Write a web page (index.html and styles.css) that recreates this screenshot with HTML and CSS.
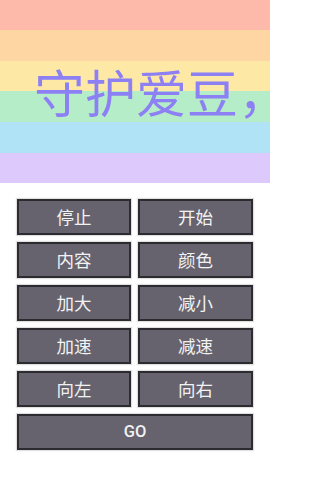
FILE: index.html
```html
<!DOCTYPE html>
<html lang="zh">
<head>
<meta charset="utf-8">
<link rel="stylesheet" href="styles.css">
</head>
<body>
<div class="banner">
  <div class="title">守护爱豆<span class="comma">，</span></div>
</div>
<div class="pad">
  <button class="btn">停止</button>
  <button class="btn">开始</button>
  <button class="btn">内容</button>
  <button class="btn">颜色</button>
  <button class="btn">加大</button>
  <button class="btn">减小</button>
  <button class="btn">加速</button>
  <button class="btn">减速</button>
  <button class="btn">向左</button>
  <button class="btn">向右</button>
  <button class="btn go">GO</button>
</div>
</body>
</html>
```
FILE: styles.css
```css
html, body {
  margin: 0;
  padding: 0;
  background: #ffffff;
  width: 270px;
  height: 480px;
  overflow: hidden;
}
body {
  font-family: "Noto Sans CJK SC", "Noto Sans", sans-serif;
}
.banner {
  height: 183px;
  background: linear-gradient(to bottom,
    #fdbaab 0, #fdbaab 30px,
    #fdd6a4 30px, #fdd6a4 61px,
    #fee8a5 61px, #fee8a5 91px,
    #b5edc8 91px, #b5edc8 122px,
    #afe3f5 122px, #afe3f5 153px,
    #ddc9fb 153px, #ddc9fb 183px);
}
.title {
  padding: 66px 0 0 34px;
  font-size: 51px;
  line-height: 51px;
  color: #8d7ff4;
  white-space: nowrap;
}
.comma {
  display: inline-block;
  width: 0.5em;
}
.pad {
  display: grid;
  grid-template-columns: 114px 115px;
  column-gap: 7px;
  row-gap: 7px;
  padding: 16px 0 0 17px;
}
.btn {
  height: 36px;
  margin: 0;
  padding: 0;
  border: 2px solid #2c2b30;
  background: #66636f;
  color: #f2f2f2;
  font-family: "Noto Sans CJK SC", sans-serif;
  font-size: 17.5px;
  line-height: 1;
  box-shadow: 0 0 1px 1px rgba(0,0,0,0.12);
}
.go {
  grid-column: 1 / 3;
  font-family: Roboto, "Noto Sans", sans-serif;
  font-weight: 500;
  font-size: 16.5px;
}
```
